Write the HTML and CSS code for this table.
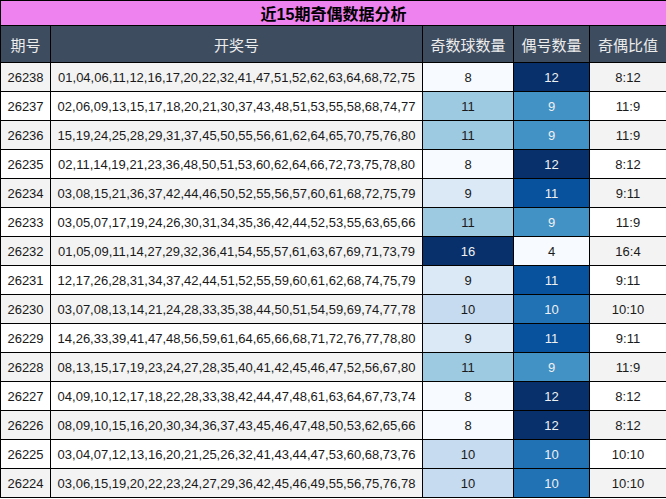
FILE: index.html
```html
<!DOCTYPE html>
<html lang="zh">
<head>
<meta charset="utf-8">
<link rel="stylesheet" href="styles.css">
</head>
<body>
<table class="tbl">
  <colgroup>
    <col class="c1"><col class="c2"><col class="c3"><col class="c4"><col class="c5">
  </colgroup>
  <thead>
    <tr class="title"><th colspan="5">近15期奇偶数据分析</th></tr>
    <tr class="head"><th>期号</th><th>开奖号</th><th>奇数球数量</th><th>偶号数量</th><th>奇偶比值</th></tr>
  </thead>
  <tbody>
    <tr class="g"><td>26238</td><td>01,04,06,11,12,16,17,20,22,32,41,47,51,52,62,63,64,68,72,75</td><td class="o8">8</td><td class="e12">12</td><td>8:12</td></tr>
    <tr><td>26237</td><td>02,06,09,13,15,17,18,20,21,30,37,43,48,51,53,55,58,68,74,77</td><td class="o11">11</td><td class="e9">9</td><td>11:9</td></tr>
    <tr class="g"><td>26236</td><td>15,19,24,25,28,29,31,37,45,50,55,56,61,62,64,65,70,75,76,80</td><td class="o11">11</td><td class="e9">9</td><td>11:9</td></tr>
    <tr><td>26235</td><td>02,11,14,19,21,23,36,48,50,51,53,60,62,64,66,72,73,75,78,80</td><td class="o8">8</td><td class="e12">12</td><td>8:12</td></tr>
    <tr class="g"><td>26234</td><td>03,08,15,21,36,37,42,44,46,50,52,55,56,57,60,61,68,72,75,79</td><td class="o9">9</td><td class="e11">11</td><td>9:11</td></tr>
    <tr><td>26233</td><td>03,05,07,17,19,24,26,30,31,34,35,36,42,44,52,53,55,63,65,66</td><td class="o11">11</td><td class="e9">9</td><td>11:9</td></tr>
    <tr class="g"><td>26232</td><td>01,05,09,11,14,27,29,32,36,41,54,55,57,61,63,67,69,71,73,79</td><td class="o16">16</td><td class="e4">4</td><td>16:4</td></tr>
    <tr><td>26231</td><td>12,17,26,28,31,34,37,42,44,51,52,55,59,60,61,62,68,74,75,79</td><td class="o9">9</td><td class="e11">11</td><td>9:11</td></tr>
    <tr class="g"><td>26230</td><td>03,07,08,13,14,21,24,28,33,35,38,44,50,51,54,59,69,74,77,78</td><td class="o10">10</td><td class="e10">10</td><td>10:10</td></tr>
    <tr><td>26229</td><td>14,26,33,39,41,47,48,56,59,61,64,65,66,68,71,72,76,77,78,80</td><td class="o9">9</td><td class="e11">11</td><td>9:11</td></tr>
    <tr class="g"><td>26228</td><td>08,13,15,17,19,23,24,27,28,35,40,41,42,45,46,47,52,56,67,80</td><td class="o11">11</td><td class="e9">9</td><td>11:9</td></tr>
    <tr><td>26227</td><td>04,09,10,12,17,18,22,28,33,38,42,44,47,48,61,63,64,67,73,74</td><td class="o8">8</td><td class="e12">12</td><td>8:12</td></tr>
    <tr class="g"><td>26226</td><td>08,09,10,15,16,20,30,34,36,37,43,45,46,47,48,50,53,62,65,66</td><td class="o8">8</td><td class="e12">12</td><td>8:12</td></tr>
    <tr><td>26225</td><td>03,04,07,12,13,16,20,21,25,26,32,41,43,44,47,53,60,68,73,76</td><td class="o10">10</td><td class="e10">10</td><td>10:10</td></tr>
    <tr class="g"><td>26224</td><td>03,06,15,19,20,22,23,24,27,29,36,42,45,46,49,55,56,75,76,78</td><td class="o10">10</td><td class="e10">10</td><td>10:10</td></tr>
  </tbody>
</table>
</body>
</html>
```

FILE: styles.css
```css
html, body {
  margin: 0;
  padding: 0;
  background: #ffffff;
}

.tbl {
  border-collapse: collapse;
  table-layout: fixed;
  width: 666px;
  font-family: "Liberation Sans", "Noto Sans CJK SC", sans-serif;
  font-size: 13px;
  color: #1a1a1a;
}

.c1 { width: 50px; }
.c2 { width: 372px; }
.c3 { width: 91px; }
.c4 { width: 76px; }
.c5 { width: 77px; }

.tbl th,
.tbl td {
  border: 1px solid #000;
  padding: 0;
  text-align: center;
  white-space: nowrap;
  overflow: hidden;
}

.title th {
  height: 24px;
  background: #ee82ee;
  color: #000;
  font-size: 16px;
  font-weight: bold;
  font-family: "Liberation Sans", "Noto Sans CJK SC", sans-serif;
}

.head th {
  height: 36px;
  background: #3e4c60;
  color: #ececec;
  font-size: 15px;
  font-weight: normal;
  font-family: "Noto Sans CJK SC", sans-serif;
}

.tbl td {
  height: 28px;
  background: #ffffff;
}

.tbl tr.g td {
  background: #f3f3f3;
}

.tbl tr td.o8 { background: #f7fbff; }
.tbl tr td.o9 { background: #dbe9f6; }
.tbl tr td.o10 { background: #c6dbef; }
.tbl tr td.o11 { background: #9ecae1; }
.tbl tr td.o16 { background: #08306b; color: #f0f0f0; }

.tbl tr td.e4 { background: #f7fbff; }
.tbl tr td.e9 { background: #4292c6; color: #f0f0f0; }
.tbl tr td.e10 { background: #2171b5; color: #f0f0f0; }
.tbl tr td.e11 { background: #08519c; color: #f0f0f0; }
.tbl tr td.e12 { background: #08306b; color: #f0f0f0; }
```
